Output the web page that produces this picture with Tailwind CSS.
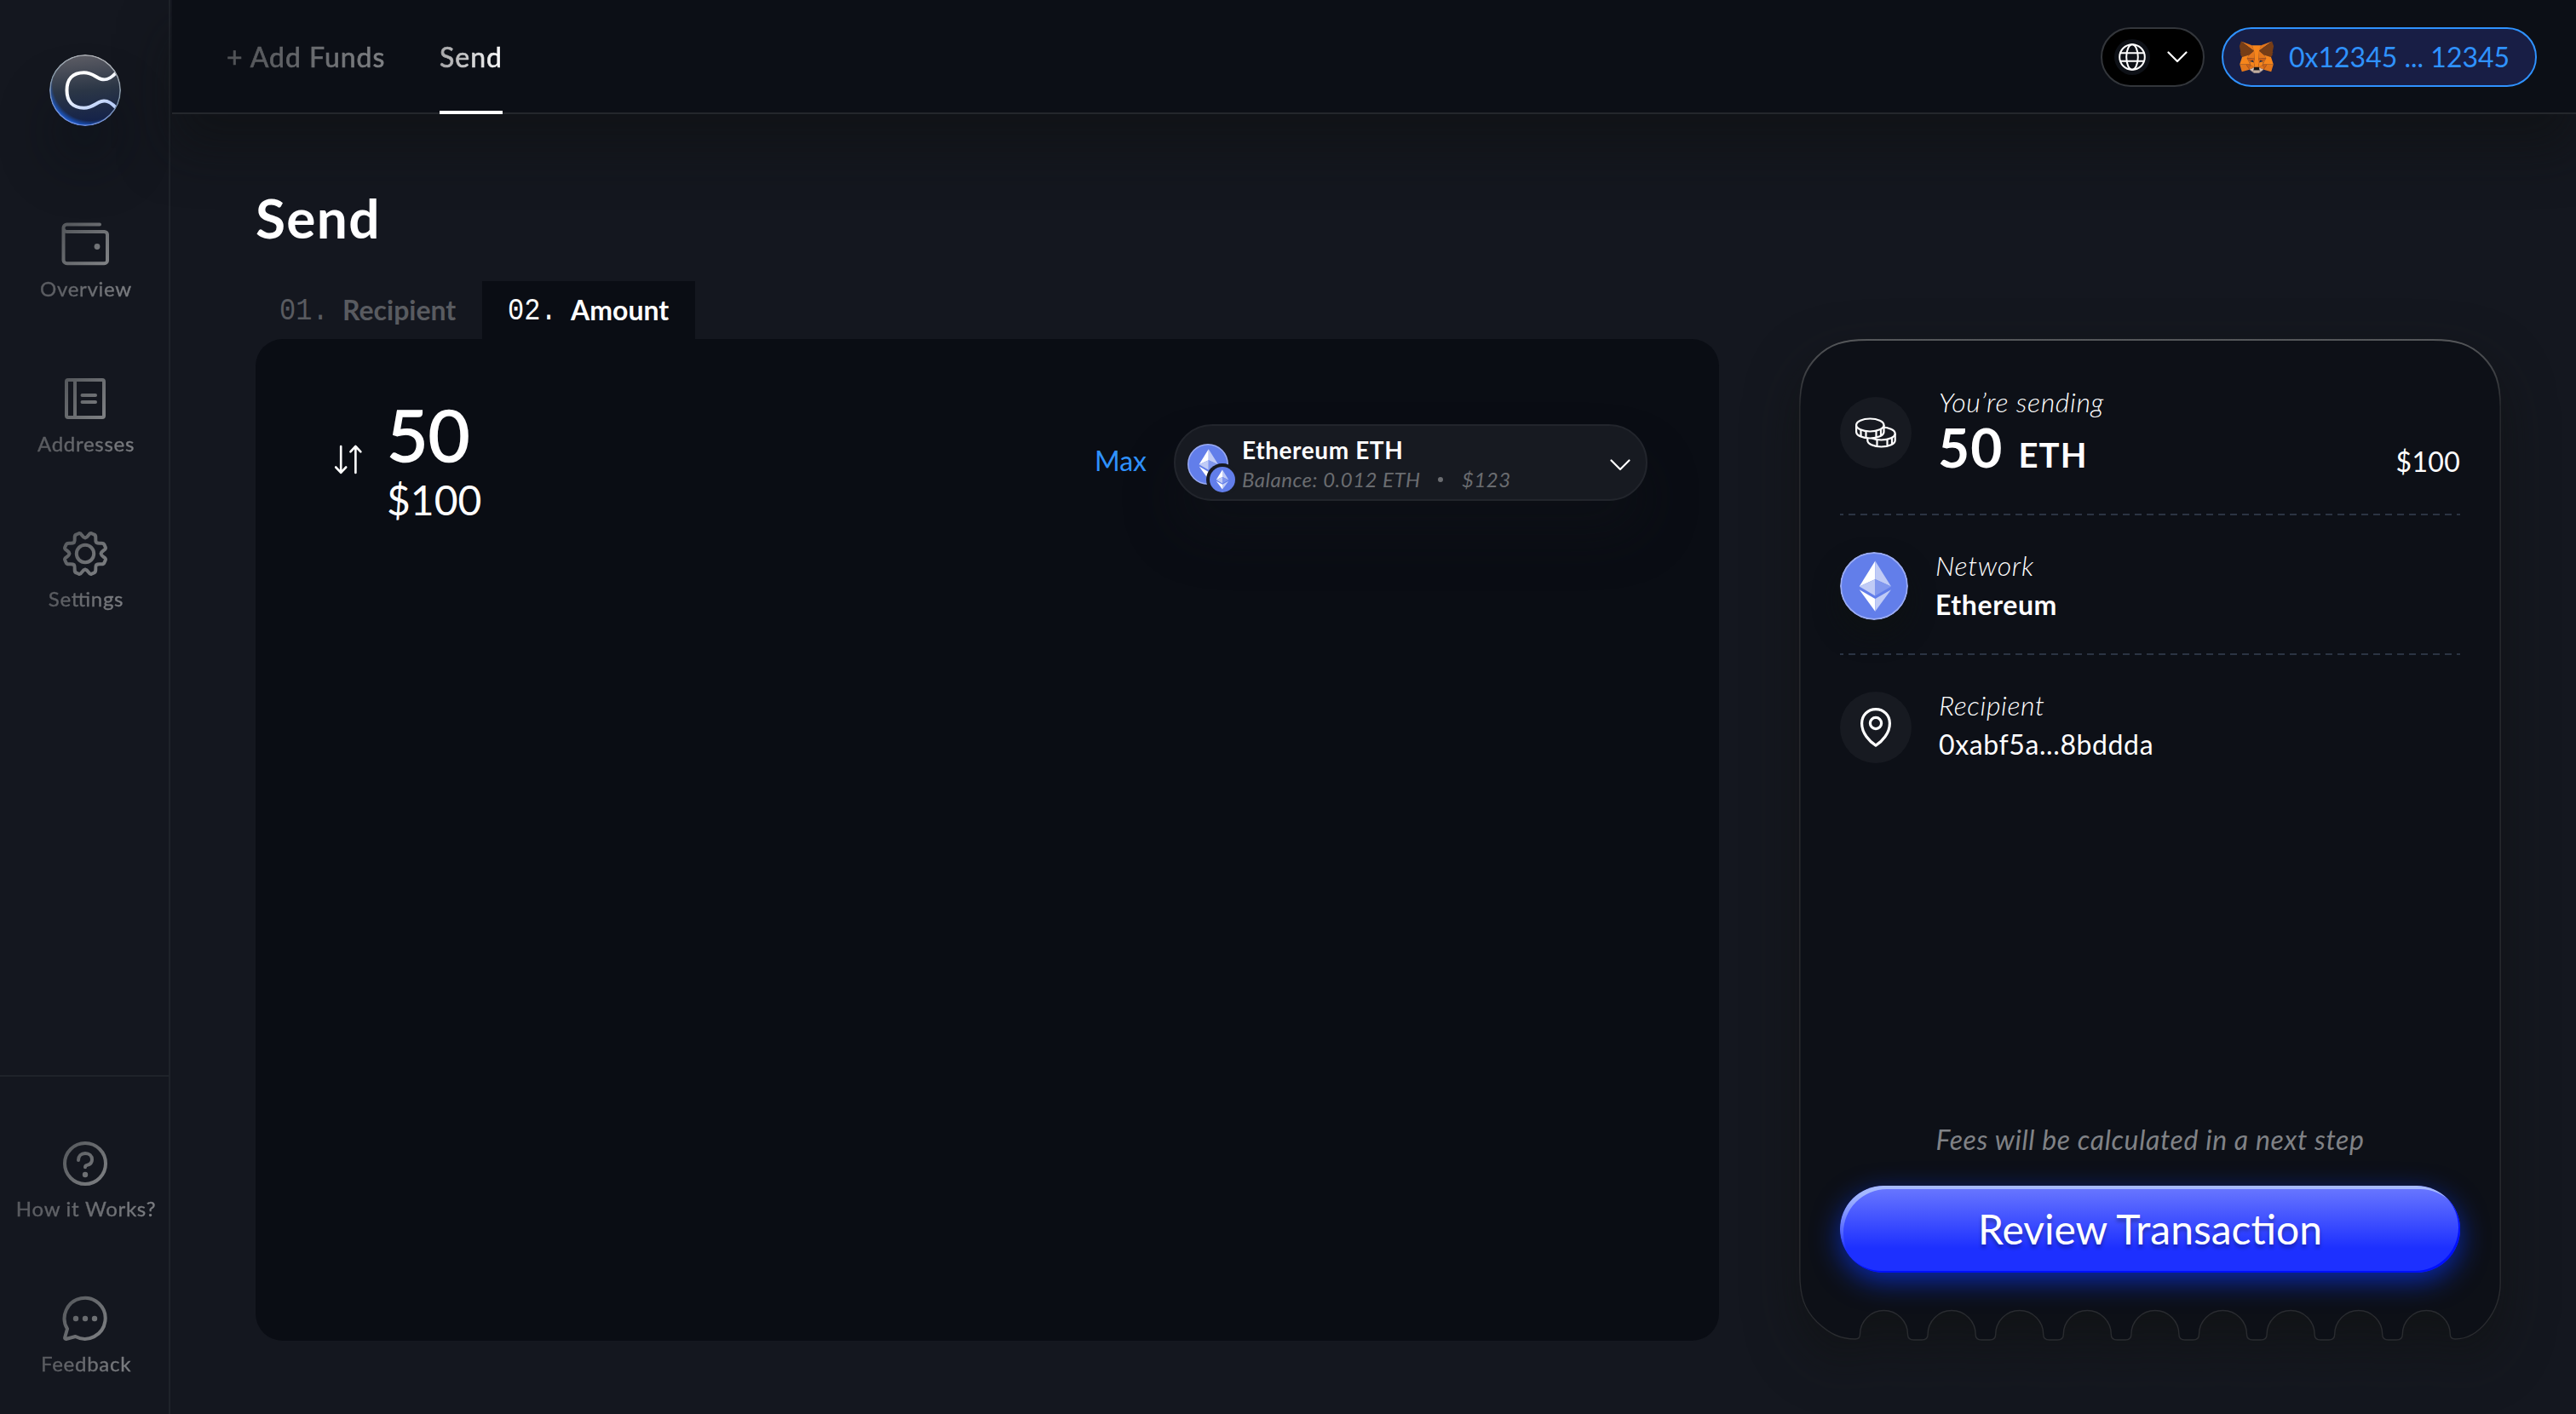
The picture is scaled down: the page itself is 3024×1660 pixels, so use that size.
<!DOCTYPE html>
<html lang="en">

<head>
  <meta charset="UTF-8" />
  <meta name="viewport" content="width=device-width, initial-scale=1.0" />
  <title>Send</title>
  <script src="https://cdn.jsdelivr.net/npm/@tailwindcss/browser@4"></script>
  <style>
    body {
      font-family: Lato, sans-serif;
      font-feature-settings: "liga" 1;
    }
  </style>
</head>

<body class="w-[3024px] h-[1660px] overflow-hidden bg-[#14171f] text-white">
  <!-- shared gradients and symbols -->
  <svg class="absolute w-0 h-0">
    <defs>
      <linearGradient id="grey" gradientUnits="userSpaceOnUse" x1="4" y1="8" x2="52" y2="48">
        <stop offset="0" stop-color="#56595d" />
        <stop offset="1" stop-color="#7d7f82" />
      </linearGradient>
      <symbol id="eth" viewBox="0 0 80 80">
        <path fill="#fff" d="M41.3 10.5V32L22.7 40.5z" />
        <path fill="#c0cbf6" d="M41.3 10.5V32L60 40.5z" />
        <path fill="#c0cbf6" d="M22.7 40.5L41.3 32v19.4z" />
        <path fill="#8197ee" d="M60 40.5L41.3 32v19.4z" />
        <path fill="#fff" d="M22.7 44.2L41.3 55v14.8z" />
        <path fill="#c0cbf6" d="M60 44.2L41.3 55v14.8z" />
      </symbol>
    </defs>
  </svg>

  <div class="flex h-full">
    <aside class="w-[200px] shrink-0 border-r-2 border-[#1f232a] flex flex-col justify-between">
      <div class="flex flex-col items-center pt-16 pl-[2px]">
        <svg class="w-[84px] h-[84px] shadow-[0_48px_60px_rgba(10,13,20,0.35)] rounded-full" viewBox="0 0 84 84" fill="none">
          <defs>
            <linearGradient id="disc" x1="0.45" y1="0" x2="0.55" y2="1">
              <stop offset="0" stop-color="#5c5c64" />
              <stop offset="0.5" stop-color="#2b3646" />
              <stop offset="1" stop-color="#12204a" />
            </linearGradient>
            <linearGradient id="rim" x1="0.7" y1="0" x2="0.4" y2="1">
              <stop offset="0" stop-color="#b3b4b8" />
              <stop offset="0.5" stop-color="#8397a8" />
              <stop offset="1" stop-color="#6f8fe0" />
            </linearGradient>
            <radialGradient id="glow" cx="0.57" cy="0.4" r="0.6">
              <stop offset="0.88" stop-color="#1c5fd8" stop-opacity="0" />
              <stop offset="1" stop-color="#1c63e0" stop-opacity="0.8" />
            </radialGradient>
            <linearGradient id="cee" x1="0" y1="0" x2="0.6" y2="1">
              <stop offset="0.4" stop-color="#fff" />
              <stop offset="1" stop-color="#bcd0fa" />
            </linearGradient>
            <clipPath id="disc-clip"><circle cx="42" cy="42" r="41" /></clipPath>
          </defs>
          <circle cx="42" cy="42" r="41.5" fill="url(#disc)" />
          <circle cx="42" cy="42" r="41.5" fill="url(#glow)" />
          <path clip-path="url(#disc-clip)" stroke="url(#cee)" stroke-width="4"
            d="M79 20.500C72 28.500 67 30.500 61 29C54.500 27.500 51 21.300 40.500 21.300C27 21.300 20.500 29 20.500 42C20.500 55 27 62.700 40.500 62.700C51 62.700 54.500 56.500 61 55C67 53.500 72 55.500 79 63.500" />
          <circle cx="42" cy="42" r="41.2" stroke="url(#rim)" stroke-width="1.6" />
        </svg>

        <nav class="mt-[110px] flex flex-col items-center gap-[85px] text-2xl/6 tracking-[0.72px] whitespace-nowrap">
          <a class="flex flex-col items-center gap-[13px]">
            <svg class="w-14 h-14" viewBox="0 0 56 56" fill="none" stroke="url(#grey)" stroke-width="4" stroke-linecap="round" stroke-linejoin="round">
              <path d="M45 5.500H6.500a4 4 0 0 0-4 4v38a4 4 0 0 0 4 3.700h44a3.500 3.500 0 0 0 3.500-3.500V17.500a3.500 3.500 0 0 0-3.500-3.500H6.500a4 4 0 0 1-4-4" />
              <circle cx="42" cy="31.500" r="3.400" fill="url(#grey)" stroke="none" />
            </svg>
            <span class="pl-[2px] pb-1 bg-linear-to-r from-[#57595e] to-[#7c7e82] bg-clip-text text-transparent [-webkit-text-stroke:0.4px_transparent]">Overview</span>
          </a>
          <a class="flex flex-col items-center gap-[13px]">
            <svg class="w-14 h-14" viewBox="0 0 56 56" fill="none" stroke="url(#grey)" stroke-width="4" stroke-linecap="round" stroke-linejoin="round">
              <rect x="6" y="6" width="44" height="44" rx="2" />
              <path d="M16 6v44.010M24.500 24h15.500M24.500 32h15.500" />
            </svg>
            <span class="pl-[2px] pb-1 bg-linear-to-r from-[#57595e] to-[#7c7e82] bg-clip-text text-transparent [-webkit-text-stroke:0.4px_transparent]">Addresses</span>
          </a>
          <a class="flex flex-col items-center gap-[13px]">
            <svg class="w-14 h-14" viewBox="-28 -28 56 56" fill="none" stroke-width="4" stroke-linejoin="round">
              <defs>
                <linearGradient id="grey-c" gradientUnits="userSpaceOnUse" x1="-24" y1="-20" x2="24" y2="20">
                  <stop offset="0" stop-color="#56595d" />
                  <stop offset="1" stop-color="#7d7f82" />
                </linearGradient>
              </defs>
              <path stroke="url(#grey-c)"
                d="M0-18.500Q2-18.800 4-21.800Q5.500-24.500 7.500-23.800L10.300-22.500Q12.500-21.800 12.300-18.500Q12-14.500 13.100-13.100Q14.500-12 18.500-12.300Q21.800-12.500 22.500-10.300L23.800-7.500Q24.500-5.500 21.800-4Q18.800-2 18.500 0Q18.800 2 21.800 4Q24.500 5.500 23.800 7.500L22.500 10.300Q21.800 12.500 18.500 12.300Q14.500 12 13.100 13.100Q12 14.500 12.300 18.500Q12.500 21.800 10.300 22.500L7.500 23.800Q5.500 24.500 4 21.800Q2 18.800 0 18.500Q-2 18.800-4 21.800Q-5.500 24.500-7.500 23.800L-10.300 22.500Q-12.500 21.800-12.300 18.500Q-12 14.500-13.100 13.100Q-14.500 12-18.500 12.300Q-21.800 12.500-22.500 10.300L-23.800 7.500Q-24.500 5.500-21.800 4Q-18.800 2-18.500 0Q-18.800-2-21.800-4Q-24.500-5.500-23.800-7.500L-22.500-10.300Q-21.800-12.500-18.500-12.300Q-14.500-12-13.100-13.100Q-12-14.500-12.300-18.500Q-12.500-21.800-10.300-22.500L-7.500-23.800Q-5.500-24.500-4-21.800Q-2-18.800 0-18.500z" />
              <circle r="10.200" stroke="url(#grey-c)" />
            </svg>
            <span class="pl-[2px] pb-1 bg-linear-to-r from-[#57595e] to-[#7c7e82] bg-clip-text text-transparent [-webkit-text-stroke:0.4px_transparent]">Settings</span>
          </a>
        </nav>
      </div>

      <nav class="h-[398px] border-t-2 border-[#1f232a] pt-[74px] pl-[2px] flex flex-col items-center gap-[85px] text-2xl/6 tracking-[0.72px] whitespace-nowrap">
        <a class="flex flex-col items-center gap-[13px]">
          <svg class="w-14 h-14" viewBox="0 0 56 56" fill="none" stroke="url(#grey)" stroke-width="4" stroke-linecap="round" stroke-linejoin="round">
            <circle cx="28" cy="28" r="24" />
            <path d="M20 24c0-5 3.300-8 8-8s8 3 8 7.300c0 4.200-3 6-5.800 6.600-1.600.4-2.200.9-2.200 2.300" />
            <circle cx="28" cy="41" r="3.200" fill="url(#grey)" stroke="none" />
          </svg>
          <span class="pl-[2px] pb-1 bg-linear-to-r from-[#57595e] to-[#7c7e82] bg-clip-text text-transparent [-webkit-text-stroke:0.4px_transparent]">How it Works?</span>
        </a>
        <a class="flex flex-col items-center gap-[13px]">
          <svg class="w-14 h-14" viewBox="0 0 56 56" fill="none" stroke="url(#grey)" stroke-width="4" stroke-linecap="round" stroke-linejoin="round">
            <path d="M7 40A24 24 0 1 1 16.500 49L5.500 52Q3.800 52 4.200 50z" />
            <g fill="url(#grey)" stroke="none">
              <circle cx="17" cy="28" r="3.200" />
              <circle cx="28" cy="28" r="3.200" />
              <circle cx="39" cy="28" r="3.200" />
            </g>
          </svg>
          <span class="pl-[2px] pb-1 bg-linear-to-r from-[#57595e] to-[#7c7e82] bg-clip-text text-transparent [-webkit-text-stroke:0.4px_transparent]">Feedback</span>
        </a>
      </nav>
    </aside>

    <div class="flex-1 pl-[2px]">
      <header class="h-[134px] border-b-2 border-[#24272c] bg-[#0c0f16] pl-16 pr-[46px] flex items-center justify-between shadow-[0_40px_60px_rgba(14,16,16,0.5)]">
        <nav class="h-[134px] -mb-[2px] flex text-[32px] tracking-[1px] whitespace-nowrap">
          <a class="w-[250px] flex items-center border-y-4 border-transparent"><span class="bg-linear-to-r from-[#4f5155] to-[#7f8184] bg-clip-text text-transparent [-webkit-text-stroke:0.7px_transparent]">+ Add Funds</span></a>
          <a class="w-[74px] flex items-center border-y-4 border-t-transparent border-b-white"><span class="bg-linear-to-r from-[#a6a6a8] to-white bg-clip-text text-transparent [-webkit-text-stroke:0.7px_transparent]">Send</span></a>
        </nav>
        <div class="flex gap-5 mt-[2px]">
          <button class="w-[122px] h-[70px] rounded-full bg-black border-2 border-[#33363b] flex items-center pl-[14px] gap-5">
            <span class="size-[42px] rounded-full bg-[#0e1117] flex items-center justify-center">
              <svg class="size-8" viewBox="0 0 32 32" fill="none" stroke="#fff" stroke-width="2">
                <circle cx="16" cy="16" r="14.800" />
                <ellipse cx="16" cy="16" rx="6.800" ry="14.800" />
                <path d="M2 11.200h28M2 20.800h28" />
              </svg>
            </span>
            <svg class="w-6 h-4" viewBox="0 0 24 16" fill="none" stroke="#fff" stroke-width="2.200" stroke-linecap="round" stroke-linejoin="round">
              <path d="M1.500 2.500L12 13 22.500 2.500" />
            </svg>
          </button>
          <button class="w-[370px] h-[70px] rounded-full bg-[#181e45] border-2 border-[#2f92ff] flex items-center pl-[18px] gap-[17px] text-[32px] text-[#2f92ff] whitespace-nowrap">
            <svg class="w-[42px] h-[38px]" viewBox="27 33 264.600 241">
              <path fill="#e2761b" d="M274.100 35.500L174.600 109.400 193 65.800zM44.400 35.500l98.700 74.600-17.500-44.300zM238.300 206.800l-26.500 40.600 56.700 15.600 16.300-55.300zM33.900 207.700L50.100 263l56.700-15.600-26.500-40.600z" />
              <path fill="#e4761b" d="M103.600 138.200l-15.800 23.900 56.300 2.500-2-60.500zM214.900 138.200l-39-34.800-1.300 61.200 56.200-2.500zM106.800 247.400l33.800-16.500-29.200-22.800zM177.900 230.900l33.900 16.500-4.700-39.300z" />
              <path fill="#d7c1b3" d="M211.800 247.400l-33.900-16.500 2.700 22.100-.3 9.300zM106.800 247.400l31.500 14.900-.2-9.300 2.500-22.100z" />
              <path fill="#233447" d="M138.800 193.500l-28.200-8.300 19.900-9.100zM179.700 193.500l8.300-17.400 20 9.100z" />
              <path fill="#cd6116" d="M106.800 247.400l4.800-40.600-31.300.9zM207 206.800l4.800 40.600 26.500-39.700zM230.800 162.100l-56.200 2.500 5.200 28.900 8.300-17.400 20 9.100zM110.600 185.200l20-9.100 8.200 17.400 5.300-28.900-56.300-2.500z" />
              <path fill="#e4751f" d="M87.800 162.100l23.600 46-.8-22.900zM208.100 185.200l-1 22.900 23.700-46zM144.100 164.600l-5.300 28.900 6.600 34.100 1.500-44.900zM174.600 164.600l-2.700 18 1.200 45 6.700-34.100z" />
              <path fill="#f6851b" d="M179.800 193.500l-6.700 34.100 4.800 3.300 29.200-22.800 1-22.900zM110.600 185.200l.8 22.900 29.200 22.800 4.800-3.300-6.600-34.100z" />
              <path fill="#c0ad9e" d="M180.300 262.300l.3-9.300-2.500-2.200h-37.700l-2.300 2.200.2 9.300-31.500-14.900 11 9 22.300 15.500h38.300l22.400-15.500 11-9z" />
              <path fill="#161616" d="M177.900 230.900l-4.800-3.300h-27.700l-4.800 3.300-2.500 22.100 2.300-2.200h37.700l2.500 2.200z" />
              <path fill="#763d16" d="M278.300 114.200l8.500-40.800-12.700-37.900-96.200 71.400 37 31.300 52.300 15.300 11.600-13.500-5-3.600 8-7.300-6.200-4.800 8-6.100zM31.800 73.400l8.500 40.800-5.400 4 8 6.100-6.100 4.800 8 7.300-5 3.600 11.500 13.500 52.300-15.300 37-31.300-96.200-71.400z" />
              <path fill="#f6851b" d="M267.200 153.500l-52.300-15.300 15.900 23.900-23.700 46 31.200-.4h46.500zM103.600 138.200l-52.300 15.300-17.400 54.200h46.400l31.100.4-23.600-46zM174.600 164.600l3.300-57.700 15.200-41.100h-67.500l15 41.100 3.500 57.700 1.200 18.200.1 44.800h27.700l.2-44.800z" />
            </svg>
            <span>0x12345 ... 12345</span>
          </button>
        </div>
      </header>

      <main class="pl-[98px] pt-[90px]">
        <h1 class="text-[64px]/[64px] font-bold tracking-[1.3px]">Send</h1>
        <div class="mt-[42px] flex h-[68px] text-[32px] whitespace-nowrap">
          <div class="w-[266px] pl-[28px] flex items-center text-[#595b60]">
            <span class="w-[74px] font-['Liberation_Mono'] scale-y-[1.13] translate-y-[2px]">01.</span><span class="font-bold">Recipient</span>
          </div>
          <div class="w-[250px] pl-[30px] bg-[#0a0d14] flex items-center">
            <span class="w-[74px] font-['Liberation_Mono'] scale-y-[1.13] translate-y-[2px]">02.</span><span class="font-bold">Amount</span>
          </div>
        </div>

        <div class="flex gap-[94px]">
          <section class="w-[1718px] h-[1176px] rounded-[32px] bg-[#0a0d14] pl-[92px] pr-[84px] pt-[72px] flex items-start justify-between">
            <div class="flex">
              <svg class="w-9 h-9 mt-[51px]" viewBox="0 0 36 36" fill="none" stroke="#fff" stroke-width="2.600" stroke-linecap="round" stroke-linejoin="round">
                <path d="M8.200 3v31M2.200 27.500l6 6.300 6-6.300M25.400 34V3M19.400 9.300l6-6.300 6 6.300" />
              </svg>
              <div class="ml-[26px]">
                <p class="text-[84px]/[84px] -mt-[2px] [-webkit-text-stroke:1.6px_#fff]">50</p>
                <p class="text-5xl/[48px] mt-[11px]">$100</p>
              </div>
            </div>
            <div class="flex items-center gap-8 mt-7">
              <span class="text-[32px] text-[#2f92ff] -mt-[5px]">Max</span>
              <button class="w-[556px] h-[90px] rounded-full bg-[#171a21] border-2 border-[#22252c] pl-[14px] pr-[18px] flex items-center text-left whitespace-nowrap shadow-[0_40px_60px_rgba(18,21,26,0.4)]">
                <svg class="w-[58px] h-[60px] mt-3" viewBox="0 0 58 60">
                  <circle cx="24" cy="26" r="24" fill="#9aabf3" />
                  <circle cx="24" cy="26" r="22.500" fill="#627eea" />
                  <use href="#eth" x="0" y="2" width="48" height="48" />
                  <circle cx="41" cy="44" r="19" fill="#171a21" />
                  <circle cx="41" cy="44" r="15" fill="#627eea" />
                  <use href="#eth" x="25" y="28" width="31" height="32" />
                </svg>
                <div class="ml-[6px] mt-[2px] flex-1">
                  <p class="text-[28px]/[28px] font-bold tracking-[0.6px]">Ethereum ETH</p>
                  <p class="mt-[9px] text-2xl/6 italic tracking-[0.5px] text-[#6a6c70] flex items-center"><span class="w-[230px]">Balance: 0.012 ETH</span><span class="size-[6px] rounded-full bg-[#6a6c70] mr-[22px]"></span><span>$123</span></p>
                </div>
                <svg class="w-6 h-4 mt-[5px]" viewBox="0 0 24 16" fill="none" stroke="#fff" stroke-width="2.200" stroke-linecap="round" stroke-linejoin="round">
                  <path d="M1.500 2.500L12 13 22.500 2.500" />
                </svg>
              </button>
            </div>
          </section>

          <!-- ticket summary -->
          <section class="relative w-[824px] h-[1176px] px-12 pt-[58px] pb-20 flex flex-col whitespace-nowrap">
            <svg class="absolute inset-0 w-full h-full overflow-visible drop-shadow-[0_24px_30px_rgba(15,17,15,0.55)]" viewBox="0 0 824 1176" fill="none">
              <defs>
                <linearGradient id="top-edge" gradientUnits="userSpaceOnUse" x1="0" y1="0" x2="0" y2="80">
                  <stop offset="0" stop-color="#55575a" />
                  <stop offset="1" stop-color="#55575a" stop-opacity="0" />
                </linearGradient>
              </defs>
              <path fill="#0d1017" stroke="#2a2c30" stroke-width="1.400"
                d="M.8 80C.8 52 6 36 21 21C36 6 52 1 80 1H744C772 1 788 6 803 21C818 36 823.200 52 823.200 80V1108C823.200 1143 797 1174 770.300 1174q-6 0-6-5.500a28 28 0 0 0-56 0q0 6.500-7 6.500h-9.600q-7 0-7-6.500a28 28 0 0 0-56 0q0 6.500-7 6.500h-9.600q-7 0-7-6.500a28 28 0 0 0-56 0q0 6.500-7 6.500h-9.600q-7 0-7-6.500a28 28 0 0 0-56 0q0 6.500-7 6.500h-9.600q-7 0-7-6.500a28 28 0 0 0-56 0q0 6.500-7 6.500h-9.600q-7 0-7-6.500a28 28 0 0 0-56 0q0 6.500-7 6.500h-9.600q-7 0-7-6.500a28 28 0 0 0-56 0q0 6.500-7 6.500h-9.600q-7 0-7-6.500a28 28 0 0 0-56 0q0 6.500-7 6.500h-9.600q-7 0-7-6.500a28 28 0 0 0-56 0q0 5.500-5.500 5.500C48 1174 36 1168 21 1154C6 1139 .8 1124 .8 1096z" />
              <path stroke="url(#top-edge)" stroke-width="2" d="M1 80C1 52 6 36 21 21C36 6 52 1 80 1H744C772 1 788 6 803 21C818 36 823 52 823 80" />
            </svg>

            <div class="relative flex flex-col flex-1 text-[32px]/[32px]">
              <div class="h-[104px] flex items-center">
                <svg class="size-[84px]" viewBox="0 0 84 84" fill="none" stroke="#fff" stroke-width="2.200">
                  <circle cx="42" cy="42" r="42" fill="#171a21" stroke="none" />
                  <ellipse cx="48.500" cy="43" rx="16.200" ry="7.500" />
                  <path d="M32.300 43v8c0 4.100 7.200 7.500 16.200 7.500s16.200-3.400 16.200-7.500v-8M43.500 50.500v7.500M55.500 50v7.500M61 47.500v7.500" />
                  <path fill="#171a21" d="M19.100 33v8c0 4.100 7.200 7.500 16.200 7.500s16.200-3.400 16.200-7.500v-8" />
                  <ellipse cx="35.300" cy="33" rx="16.200" ry="7.500" fill="#171a21" />
                  <path d="M24.500 38.500v8M30.500 40.500v8M42.500 40v8M48 37.500v8" />
                </svg>
                <div class="ml-[32px] flex-1">
                  <p class="italic font-light tracking-[0.65px]">You’re sending</p>
                  <p class="mt-[5px] mb-[3px] -ml-px text-[64px]/[64px] font-bold tracking-[1.2px]">50 <span class="text-[40px]/[40px] ml-[1px]">ETH</span></p>
                </div>
                <p class="self-end mb-[2px] tracking-[0.3px]">$100</p>
              </div>
              <div class="mt-[43px] h-[2px] bg-[repeating-linear-gradient(90deg,#2b3443_0_4px,transparent_4px_10px,#2b3443_10px_14px)]"></div>
              <div class="mt-[43px] h-20 flex">
                <svg class="size-20 rounded-full shadow-[0_16px_30px_rgba(14,18,16,0.6)]" viewBox="0 0 80 80">
                  <circle cx="40" cy="40" r="39" fill="#627eea" stroke="#9aabf3" stroke-width="2" />
                  <use href="#eth" width="80" height="80" />
                </svg>
                <div class="ml-8">
                  <p class="italic font-light tracking-[0.65px]">Network</p>
                  <p class="mt-[14px] font-bold tracking-[0.6px]">Ethereum</p>
                </div>
              </div>
              <div class="mt-[39px] h-[2px] bg-[repeating-linear-gradient(90deg,#2b3443_0_4px,transparent_4px_10px,#2b3443_10px_14px)]"></div>
              <div class="mt-[43px] h-[84px] flex">
                <svg class="size-[84px]" viewBox="0 0 84 84" fill="none" stroke="#fff" stroke-width="3.200" stroke-linejoin="round">
                  <circle cx="42" cy="42" r="42" fill="#171a21" stroke="none" />
                  <path d="M42 20.600c-9.500 0-16.400 7.400-16.400 16.600 0 11.500 9 21.300 16.400 26 7.400-4.700 16.400-14.500 16.400-26 0-9.200-6.900-16.600-16.400-16.600z" />
                  <circle cx="42" cy="37" r="6.600" />
                </svg>
                <div class="ml-8">
                  <p class="italic font-light tracking-[0.65px]">Recipient</p>
                  <p class="mt-[14px] tracking-[0.6px]">0xabf5a...8bddda</p>
                </div>
              </div>
              <p class="mt-auto text-center italic text-[#808286] tracking-[0.62px]">Fees will be calculated in a next step</p>
              <button class="relative mt-[38px] h-[102px] rounded-full text-5xl/[48px] text-shadow-[0_4px_4px_rgba(0,0,0,0.3)] bg-[linear-gradient(180deg,#6b79ff_0%,#1d30ff_72%)] shadow-[inset_-2px_-2px_0_#0010ff,0_10px_32px_rgba(8,56,255,0.65)] before:absolute before:inset-0 before:rounded-full before:shadow-[inset_4px_4px_0_rgba(200,222,255,0.65)] before:[mask-image:linear-gradient(#000_10%,transparent_75%)]">Review Transaction</button>
            </div>
          </section>
        </div>
      </main>
    </div>
  </div>
</body>

</html>
